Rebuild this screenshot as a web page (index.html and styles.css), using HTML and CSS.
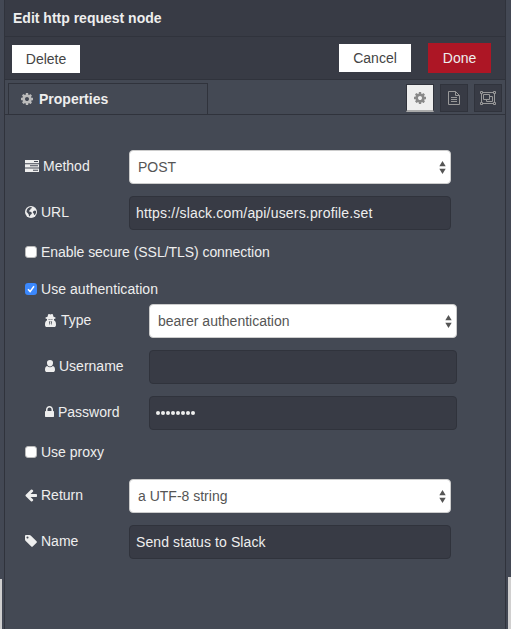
FILE: index.html
```html
<!DOCTYPE html>
<html lang="en">
<head>
<meta charset="utf-8">
<title>Edit http request node</title>
<link rel="stylesheet" href="styles.css">
</head>
<body>
<svg class="defs" aria-hidden="true">
  <symbol id="cog" viewBox="0 0 1792 1792"><path d="M1152 896q0-106-75-181t-181-75-181 75-75 181 75 181 181 75 181-75 75-181zm512-109v222q0 12-8 23t-20 13l-185 28q-19 54-39 91 35 50 107 138 10 12 10 25t-9 23q-27 37-99 108t-94 71q-12 0-26-9l-138-108q-44 23-91 38-16 136-29 186-7 28-36 28h-222q-14 0-24.5-8.5t-11.5-21.5l-28-184q-49-16-90-37l-141 107q-10 9-25 9-14 0-25-11-126-114-165-168-7-10-7-23 0-12 8-23 15-21 51-66.5t54-70.5q-27-50-41-99l-183-27q-13-2-21-12.5t-8-23.5v-222q0-12 8-23t19-13l186-28q14-46 39-92-40-57-107-138-10-12-10-24 0-10 9-23 26-36 98.5-107.5t94.5-71.5q13 0 26 10l138 107q44-23 91-38 16-136 29-186 7-28 36-28h222q14 0 24.5 8.5t11.5 21.5l28 184q49 16 90 37l142-107q9-9 24-9 13 0 25 10 129 119 165 170 7 8 7 22 0 12-8 23-15 21-51 66.5t-54 70.5q26 50 41 98l183 28q13 2 21 12.5t8 23.5z"/></symbol>
  <symbol id="updown" viewBox="0 0 7 13"><path d="M3.500 0L6.700 5.300H.3zM3.500 13L.3 7.700h6.400z"/></symbol>
</svg>
<main class="tray">
  <header class="title">Edit http request node</header>
  <div class="toolbar">
    <button class="btn delete">Delete</button>
    <button class="btn cancel">Cancel</button>
    <button class="btn done">Done</button>
  </div>
  <nav class="tabs">
    <div class="tab"><svg class="cog"><use href="#cog"/></svg>Properties</div>
    <div class="tab-buttons">
      <button class="mini active"><svg class="cog"><use href="#cog"/></svg></button>
      <button class="mini"><svg width="12" height="14" viewBox="0 0 12 14" fill="none" stroke="currentColor"><path d="M.5.5h7l4 4v9H.5zM7.5.5v4h4M3 6.5h6M3 8.5h6M3 10.5h6"/></svg></button>
      <button class="mini"><svg width="16" height="14" viewBox="0 0 16 14" fill="none" stroke="currentColor"><path d="M3 1.500h10M3 12.500h10M1.500 3v8M14.500 3v8M.5.5h2v2h-2zM13.500.5h2v2h-2zM.5 11.500h2v2h-2zM13.500 11.500h2v2h-2zM3.500 3.500h6v5h-6zM9.500 5.500h3v5h-6v-2"/></svg></button>
    </div>
  </nav>
  <form class="form">
    <div class="row">
      <label><svg width="14" height="12" viewBox="0 0 14 12"><path fill-rule="evenodd" d="M0 0h14v3.200H0zM9 1v1h4V1zM0 4.300h14v3.200H0zM5 5.300v1h8v-1zM0 8.600h14V12H0zM8 9.800v1h5v-1z"/></svg>Method</label>
      <div class="field select"><span>POST</span><svg><use href="#updown"/></svg></div>
    </div>
    <div class="row">
      <label><svg width="12" height="12" viewBox="0 0 12 12"><circle cx="6" cy="6" r="6"/><path class="sea" d="M4.600 1.300l1.700-.3.700 1-1.500.8-.3 1.200-1.200.7.200.8 1.300.2 1.400 1-.3 1.200-1.400 1.200-.2 1.500-1-.5-.4-1.900-1.200-1.400-.9-.8.4-2.300 1.100-1.500zM8.300 5.200l1.500-.7 1.200.5.100 1.500-.8 1.900-1.200.6-.3-1.600-1-.8z"/></svg>URL</label>
      <div class="field url">https://slack.com/api/users.profile.set</div>
    </div>
    <div class="check secure"><span class="box"></span>Enable secure (SSL/TLS) connection</div>
    <div class="check auth"><span class="box checked"><svg width="12" height="12" viewBox="0 0 12 12"><path d="M3 6.300l2.100 2.300L9 3.200" fill="none" stroke="#fff" stroke-width="1.500"/></svg></span>Use authentication</div>
    <div class="nested">
      <div class="row">
        <label><svg class="i-type" width="11" height="13" viewBox="0 0 11 13"><path fill-rule="evenodd" d="M3.200.3Q4.200-.2 5.500.5 6.800-.2 7.800.3L8.500 2.700l2 .7v1l-1.500.5v1.400c1.400.7 2 2 2 4.400 0 1.600-.7 2.300-2 2.300H2C.7 13 0 12.300 0 10.700c0-2.400.6-3.700 2-4.400V4.900L.5 4.400v-1l2-.7zM3.300 4.900v.7h1.700l.5-.3.500.3h1.700v-.7zM3.900 7.300l.8 4 .5-2.300-.4-.9h1.400l-.4.900.5 2.300.8-4-1.600.5z"/></svg>Type</label>
        <div class="field select"><span>bearer authentication</span><svg><use href="#updown"/></svg></div>
      </div>
      <div class="row">
        <label><svg width="10" height="12" viewBox="0 0 10 12"><path d="M5 0a3 3 0 0 1 3 3.200C8 5 6.700 6.500 5 6.500S2 5 2 3.200A3 3 0 0 1 5 0zM2.200 6c1.600 1.600 4 1.600 5.600 0C9.500 6.300 10 8 10 9.700S9.200 12 8 12H2C.8 12 0 11.400 0 9.700S.5 6.300 2.200 6z"/></svg>Username</label>
        <div class="field"></div>
      </div>
      <div class="row">
        <label><svg width="9" height="14" viewBox="320 0 1152 1792"><path d="M640 768h512v-192q0-106-75-181t-181-75-181 75-75 181v192zm832 96v576q0 40-28 68t-68 28h-960q-40 0-68-28t-28-68v-576q0-40 28-68t68-28h32v-192q0-184 132-316t316-132 316 132 132 316v192h32q40 0 68 28t28 68z"/></svg>Password</label>
        <div class="field password"><i></i><i></i><i></i><i></i><i></i><i></i><i></i><i></i></div>
      </div>
    </div>
    <div class="check proxy"><span class="box"></span>Use proxy</div>
    <div class="row">
      <label><svg width="12" height="14" viewBox="128 0 1536 1792"><path d="M1664 896v128q0 53-32.500 90.500t-84.500 37.500h-704l293 294q38 36 38 90t-38 90l-75 76q-37 37-90 37-52 0-91-37l-651-652q-37-37-37-90 0-52 37-91l651-650q38-38 91-38 52 0 90 38l75 74q38 38 38 91t-38 91l-293 293h704q52 0 84.500 37.500t32.500 90.500z"/></svg>Return</label>
      <div class="field select"><span>a UTF-8 string</span><svg><use href="#updown"/></svg></div>
    </div>
    <div class="row">
      <label><svg width="12" height="14" viewBox="128 0 1536 1792"><path d="M576 448q0-53-37.500-90.500t-90.500-37.500-90.500 37.500-37.500 90.500 37.500 90.500 90.500 37.500 90.500-37.500 37.500-90.500zm1067 576q0 53-37 90l-491 492q-39 37-91 37-53 0-90-37l-715-716q-38-37-64.500-101t-26.500-117v-416q0-52 38-90t90-38h416q53 0 117 26.500t102 64.500l715 714q37 39 37 91z"/></svg>Name</label>
      <div class="field name">Send status to Slack</div>
    </div>
  </form>
</main>
<div class="edge left"></div>
<div class="edge right"></div>
</body>
</html>
```
FILE: styles.css
```css
* { box-sizing: border-box; }
body {
  margin: 0;
  height: 629px;
  overflow: hidden;
  padding: 0 5px 0 4px;
  background: #434854;
  color: #eee;
  font: 14px/20px "Liberation Sans", Arial, sans-serif;
}
.defs { display: none; }
svg { fill: currentColor; flex: none; }
svg[fill="none"] { fill: none; }
button { font: inherit; padding: 0; border: 0; border-radius: 0; }
.tray {
  height: 629px;
  background: #444954;
  border: solid #30333c;
  border-width: 0 1px;
}
.title {
  height: 37px;
  padding: 8px 8px 0;
  background: #383b45;
  border-bottom: 1px solid #30333c;
  font-weight: bold;
}
.toolbar {
  display: flex;
  align-items: center;
  height: 43px;
  padding: 0 14px 1px 7px;
  background: #383b45;
  border-bottom: 1px solid #30333c;
}
.btn { height: 28px; background: #fff; color: #444; }
.delete { width: 68px; margin-top: 2px; margin-right: auto; }
.cancel { width: 72px; }
.done { width: 63px; height: 30px; margin-left: 17px; background: #ad1625; color: #eee; }
.tabs {
  display: flex;
  justify-content: space-between;
  height: 35px;
  padding: 3px 3px 0;
  border-bottom: 1px solid #30333c;
}
.tab {
  display: flex;
  align-items: center;
  width: 200px;
  padding-left: 11px;
  border: 1px solid #30333c;
  border-bottom: 0;
  font-weight: bold;
}
.cog { width: 14px; height: 14px; color: #bbb; }
.tab .cog { margin-right: 5px; }
.tab-buttons { display: flex; gap: 6px; padding-top: 1px; }
.mini {
  display: flex;
  align-items: center;
  justify-content: center;
  width: 28px;
  height: 28px;
  background: #383b45;
  border: 1px solid #30333c;
  color: #999;
}
.mini.active { background: #eee; border-bottom: 2px solid #aaa; }
.mini .cog { color: #888; }
.form { padding: 35px 20px 0; }
.row { display: flex; height: 34px; margin-bottom: 12px; }
label { display: flex; align-items: center; width: 104px; height: 32px; }
label svg { margin-right: 4px; }
label .i-type { margin-right: 5px; }
.sea { fill: #444954; }
.field {
  display: flex;
  align-items: center;
  width: 322px;
  height: 34px;
  padding: 0 6px;
  background: #383b45;
  border: 1px solid #30333c;
  border-radius: 4px;
}
.url { letter-spacing: .18px; }
.name { letter-spacing: .1px; }
.select {
  justify-content: space-between;
  padding: 0 4px 0 8px;
  background: #fff;
  border-color: #ccc;
  color: #555;
}
.select svg { width: 7px; height: 13px; }
.check { display: flex; align-items: center; height: 20px; }
.box {
  width: 12px;
  height: 12px;
  margin-right: 4px;
  background: #fff;
  border: 1px solid #bbb;
  border-radius: 3px;
}
.box.checked { display: flex; border: 0; background: #3b88fd; }
.secure { margin-bottom: 17px; letter-spacing: -.05px; }
.auth { margin-bottom: 5px; letter-spacing: .06px; }
.nested { padding-left: 20px; }
.nested .field { width: 308px; }
.nested .password { gap: 1px; padding-left: 6px; }
.password i { width: 4px; height: 4px; border-radius: 50%; background: #eee; }
.proxy { margin-bottom: 17px; }
.edge { position: absolute; bottom: 0; background: #d0cfcf; }
.left { left: 0; width: 2px; height: 50px; }
.right { right: 0; width: 3px; height: 52px; }
```
